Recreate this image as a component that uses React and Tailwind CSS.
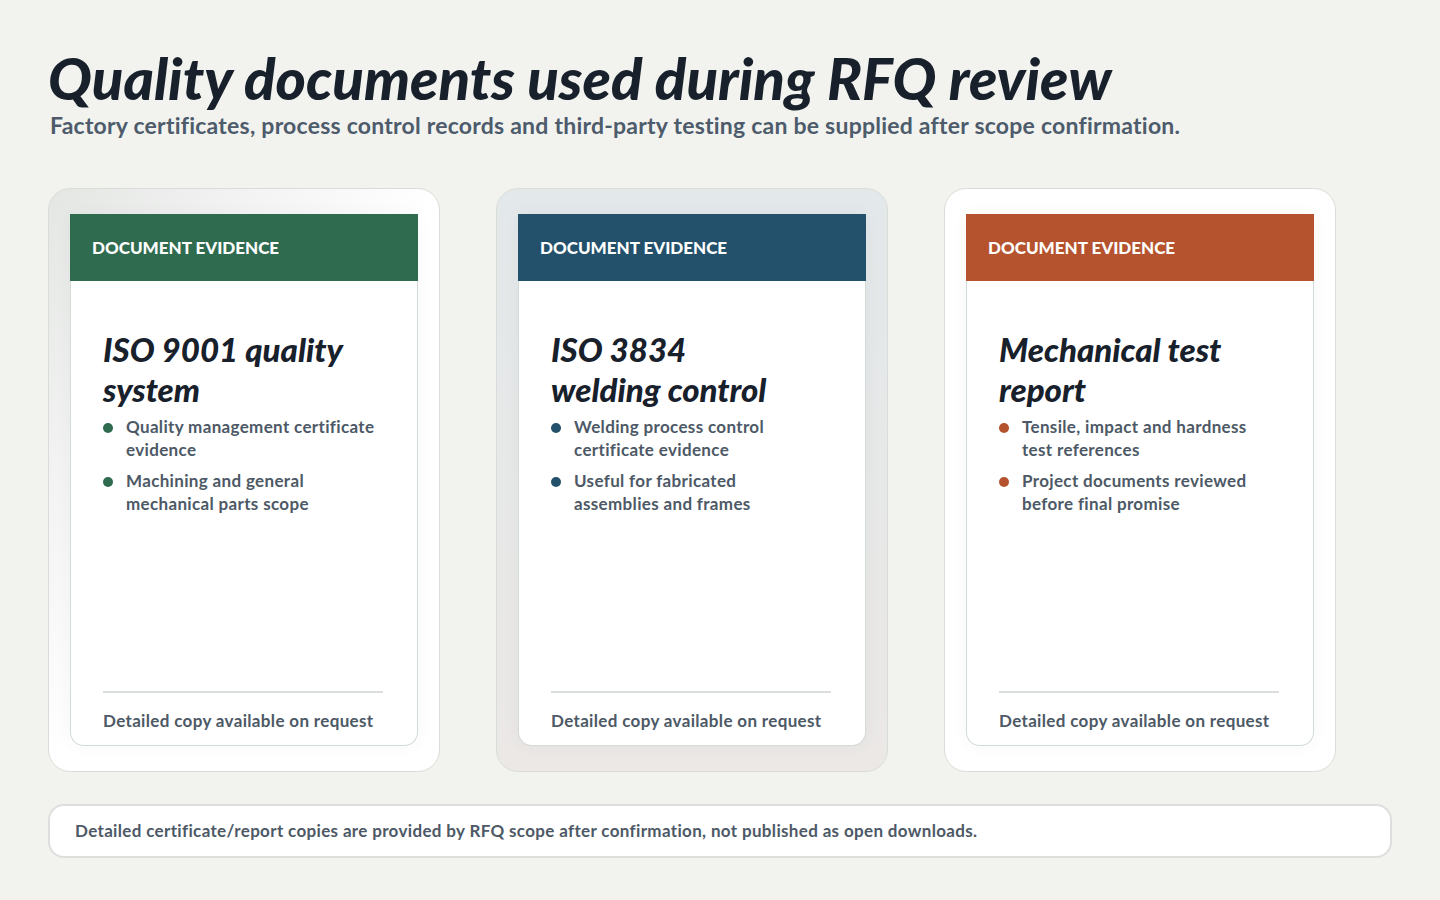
const CARDS = [
  {
    color: "bg-[#2f6b4f]",
    dot: "bg-[#2f6b4f]",
    outer: "bg-gradient-to-br from-[#e4e6e4] via-white to-white",
    title: ["ISO 9001 quality", "system"],
    items: ["Quality management certificate evidence", "Machining and general mechanical parts scope"],
  },
  {
    color: "bg-[#23506a]",
    dot: "bg-[#23506a]",
    outer: "bg-gradient-to-b from-[#e3e8ea] to-[#ebe8e6]",
    title: ["ISO 3834", "welding control"],
    items: ["Welding process control certificate evidence", "Useful for fabricated assemblies and frames"],
  },
  {
    color: "bg-[#b5532e]",
    dot: "bg-[#b5532e]",
    outer: "bg-white",
    title: ["Mechanical test", "report"],
    items: ["Tensile, impact and hardness test references", "Project documents reviewed before final promise"],
  },
];

function Card({ card }) {
  return (
    <div className={`w-[392px] h-[584px] rounded-[22px] border border-[#d9ddd8] px-[21px] pt-[25px] pb-[25px] ${card.outer}`}>
      <div className="h-full flex flex-col bg-white rounded-b-[14px] border border-[#d3dcd6] border-t-0 shadow-[0_0_18px_rgba(0,0,0,0.04)]">
        <div className={`${card.color} h-[67px] -mx-px flex items-center px-[22px]`}>
          <span className="text-white text-[17px] font-black">DOCUMENT EVIDENCE</span>
        </div>
        <div className="flex-1 flex flex-col px-[32px] pt-[48px]">
          <h2 className="text-[#17202b] text-[33px] leading-[40px] font-black italic">
            {card.title[0]}
            <br />
            {card.title[1]}
          </h2>
          <ul className="mt-[6px] space-y-[8px]">
            {card.items.map((it) => (
              <li key={it} className="flex gap-[13px]">
                <span className={`mt-[8px] w-[10px] h-[10px] rounded-full shrink-0 ${card.dot}`} />
                <span className="text-[#4d5966] text-[17px] leading-[23px] font-bold tracking-[0.02em] w-[250px]">{it}</span>
              </li>
            ))}
          </ul>
          <div className="mt-auto border-t-2 border-[#dadfdc] w-[280px]" />
          <p className="mt-[15px] mb-[12px] text-[#4d5966] text-[17px] font-bold tracking-[0.02em] whitespace-nowrap">
            Detailed copy available on request
          </p>
        </div>
      </div>
    </div>
  );
}

export default function App() {
  return (
    <div className="min-h-[900px] bg-[#f2f3ef] px-[48px] pt-[46px] [font-family:Lato,sans-serif]">
      <h1 className="text-[#17202b] text-[58px] leading-[64px] font-black italic">
        Quality documents used during RFQ review
      </h1>
      <p className="ml-[2px] text-[#4d5b6b] text-[23px] leading-[30px] font-bold tracking-[0.01em]">
        Factory certificates, process control records and third-party testing can be supplied after scope confirmation.
      </p>
      <div className="mt-[48px] flex gap-[56px]">
        {CARDS.map((c, i) => (
          <Card key={i} card={c} />
        ))}
      </div>
      <div className="mt-[32px] w-[1344px] h-[54px] rounded-[16px] border-2 border-[#dcdfdb] bg-white flex items-center px-[25px]">
        <span className="text-[#4d5966] text-[17px] font-bold tracking-[0.02em]">
          Detailed certificate/report copies are provided by RFQ scope after confirmation, not published as open downloads.
        </span>
      </div>
    </div>
  );
}
